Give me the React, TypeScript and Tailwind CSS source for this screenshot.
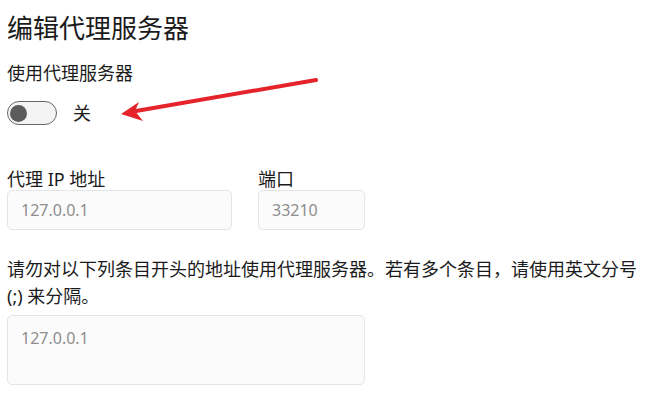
import React from "react"

const font = "font-['Noto_Sans','Noto_Sans_CJK_SC',sans-serif]"

const Field = ({ label, value, width }: { label: string; value: string; width: string }) => (
    <div className="flex flex-col">
        <label className="text-[18px] leading-[22px]">{label}</label>
        <input
            readOnly
            placeholder={value}
            className={`${width} h-[40px] rounded-[5px] border border-[#e5e5e5] bg-[#fbfbfb] pl-[13px] text-[16px] outline-none placeholder:text-[#8e8e8e]`}
        />
    </div>
)

const App = () => (
    <div className={`relative w-[646px] h-[400px] overflow-hidden bg-white text-[#1b1b1b] ${font}`}>
        <div className="flex flex-col pl-[7px]">
            <h1 className="mt-[11px] text-[26px] leading-[34px]">编辑代理服务器</h1>
            <p className="mt-[16px] text-[18px] leading-[24px]">使用代理服务器</p>
            <div className="mt-[16px] flex h-[24px] items-center gap-[16px]">
                <div className="flex h-[24px] w-[50px] items-center rounded-full border-[1.5px] border-[#666666] bg-[#f4f4f4] pl-[2px]">
                    <div className="h-[17px] w-[17px] rounded-full bg-[#5c5c5c]" />
                </div>
                <span className="text-[18px] leading-[24px]">关</span>
            </div>

            <div className="mt-[43px] flex gap-[26px]">
                <Field label="代理 IP 地址" value="127.0.0.1" width="w-[225px]" />
                <Field label="端口" value="33210" width="w-[107px]" />
            </div>

            <p className="mt-[26px] w-[634px] text-[18px] leading-[27px]">
                请勿对以下列条目开头的地址使用代理服务器。若有多个条目，请使用英文分号 (;) 来分隔。
            </p>
            <textarea
                readOnly
                placeholder="127.0.0.1"
                className="mt-[5px] h-[70px] w-[358px] resize-none rounded-[5px] border border-[#e5e5e5] bg-[#fbfbfb] px-[13px] pt-[10px] text-[16px] outline-none placeholder:text-[#8e8e8e]"
            />
        </div>

        {/* annotation arrow */}
        <svg className="pointer-events-none absolute inset-0" width="646" height="400" viewBox="0 0 646 400">
            <line x1="316" y1="80" x2="136" y2="111" stroke="#e5232b" strokeWidth="4" strokeLinecap="round" />
            <polygon points="121,114 139,102 135,111 143,121" fill="#e5232b" />
        </svg>
    </div>
)

export default App
